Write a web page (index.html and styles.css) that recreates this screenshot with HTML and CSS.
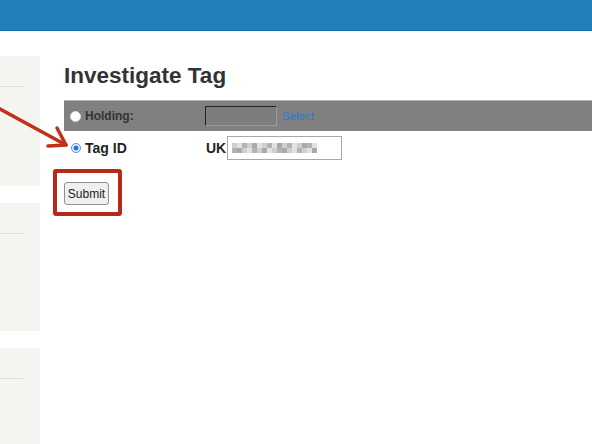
FILE: index.html
```html
<!DOCTYPE html>
<html lang="en">
<head>
    <meta charset="UTF-8">
    <meta name="viewport" content="width=device-width, initial-scale=1.0">
    <title>Investigate Tag</title>
    <link rel="stylesheet" href="styles.css">
</head>
<body>
    <header class="topbar"></header>
    <div class="page">
        <aside class="sidebar">
            <div class="side-panel"><div class="side-rule"></div></div>
            <div class="side-panel"><div class="side-rule"></div></div>
            <div class="side-panel side-panel-last"><div class="side-rule"></div></div>
        </aside>
        <main class="content">
            <h1>Investigate Tag</h1>
            <form class="tag-form" onsubmit="return false">
                <div class="row row-holding">
                    <label class="choice">
                        <span class="radio"></span>
                        <span class="choice-text small">Holding:</span>
                    </label>
                    <div class="field">
                        <span class="holding-input"></span>
                        <a href="#" class="select-link">Select</a>
                    </div>
                </div>
                <div class="row row-tag">
                    <label class="choice">
                        <span class="radio radio-on"></span>
                        <span class="choice-text">Tag ID</span>
                    </label>
                    <div class="field">
                        <span class="prefix">UK</span>
                        <span class="tag-input">
                            <!-- masked tag number -->
                            <span class="mask">
                                <i class="a"></i><i class="c"></i><i class="b"></i><i class="a"></i><i class="d"></i><i class="c"></i><i class="a"></i><i class="b"></i><i class="c"></i><i class="d"></i><i class="a"></i><i class="b"></i><i class="c"></i><i class="a"></i><i class="d"></i><i class="b"></i><i class="c"></i>
                                <i class="b"></i><i class="d"></i><i class="a"></i><i class="c"></i><i class="b"></i><i class="a"></i><i class="d"></i><i class="c"></i><i class="a"></i><i class="b"></i><i class="d"></i><i class="a"></i><i class="c"></i><i class="b"></i><i class="a"></i><i class="c"></i><i class="d"></i>
                            </span>
                        </span>
                    </div>
                </div>
                <div class="actions">
                    <button type="submit">Submit</button>
                </div>
            </form>
        </main>
    </div>

    <!-- callouts drawn on top of the form -->
    <svg class="callout-arrow" width="80" height="60" viewBox="0 0 80 60">
        <path d="M-2 12 L66 49" />
        <path d="M57 32 L66 49 L48 50" />
    </svg>
    <div class="callout-box"></div>
</body>
</html>
```

FILE: styles.css
```css
body {
    margin: 0;
    font-family: "Liberation Sans", Arial, sans-serif;
    background: #fff;
    color: #333;
    overflow: hidden;
}
.topbar {
    height: 30px;
    background: #2180ba;
    border-bottom: 1px solid #1c6fa3;
}
.page {
    display: grid;
    grid-template-columns: 40px 1fr;
    column-gap: 24px;
    height: 413px;
    overflow: hidden;
}
.sidebar {
    padding-top: 25px;
    display: flex;
    flex-direction: column;
    gap: 17px;
}
.side-panel {
    height: 130px;
    flex-shrink: 0;
    background: #f4f4f1;
    padding-top: 30px;
    box-sizing: border-box;
}
.side-panel + .side-panel {
    height: 128px;
}
.side-panel-last {
    height: 96px;
}
.side-rule {
    width: 23px;
    height: 1px;
    background: #dcdcd8;
}
.content {
    min-width: 0;
}
h1 {
    margin: 32px 0 12px;
    font-size: 22.5px;
    line-height: 25px;
    font-weight: bold;
    color: #333;
}
.row {
    display: grid;
    grid-template-columns: 141px 1fr;
    align-items: center;
}
.row-holding {
    height: 30px;
    background: #808080;
    border-top: 1px solid #b4b4b4;
}
.row-tag {
    height: 34px;
}
.choice {
    display: flex;
    align-items: center;
    gap: 4px;
    padding-left: 6px;
}
.radio {
    width: 9px;
    height: 9px;
    border-radius: 50%;
    background: #fff;
    border: 0.5px solid #ddd;
}
.radio-on {
    width: 8px;
    height: 8px;
    background: #1f6fdc;
    border: 1px solid #5b9bf0;
    box-shadow: inset 0 0 0 1.5px #fff;
    margin-left: 1px;
}
.choice-text {
    font-size: 14px;
    font-weight: bold;
    color: #222;
}
.choice-text.small {
    font-size: 12px;
    color: #333;
}
.field {
    display: flex;
    align-items: center;
}
.holding-input {
    width: 70px;
    height: 18px;
    border-top: 1px solid #222;
    border-left: 1px solid #222;
    border-right: 1px solid #999;
    border-bottom: 1px solid #999;
    background: #7d7d7d;
}
.select-link {
    margin-left: 5px;
    font-size: 11.5px;
    color: #2a7cc4;
    text-decoration: none;
}
.prefix {
    margin-left: 1px;
    font-size: 14px;
    font-weight: bold;
    color: #222;
}
.tag-input {
    margin-left: 1px;
    width: 109px;
    height: 22px;
    border: 1px solid #a9a9a9;
    background: #fff;
    display: flex;
    align-items: center;
    padding-left: 4px;
}
.mask {
    display: grid;
    grid-template-columns: repeat(17, 5px);
    grid-auto-rows: 5px;
    filter: blur(0.6px);
}
.mask i {
    display: block;
}
.mask .a { background: #cfcfcf; }
.mask .b { background: #b3b3b3; }
.mask .c { background: #e2e2e2; }
.mask .d { background: #a9a9a9; }
.actions {
    margin-top: 17px;
}
button {
    font-family: "Liberation Sans", Arial, sans-serif;
    font-size: 12px;
    width: 45px;
    height: 23px;
    padding: 0;
    color: #222;
    background: #efefef;
    border: 1px solid #8f8f8f;
    border-radius: 3px;
}
.callout-arrow {
    position: absolute;
    left: 0;
    top: 96px;
    overflow: visible;
}
.callout-arrow path {
    fill: none;
    stroke: #c1311c;
    stroke-width: 3.5;
    stroke-linecap: round;
    stroke-linejoin: round;
}
.callout-box {
    position: absolute;
    left: 53px;
    top: 169px;
    width: 61px;
    height: 39px;
    border: 4px solid #b72a18;
    border-radius: 3px;
}
```
